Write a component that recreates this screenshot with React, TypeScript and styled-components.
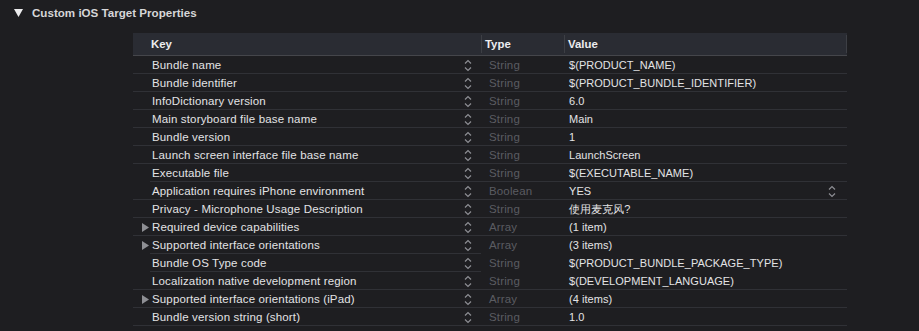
import styled, { createGlobalStyle } from 'styled-components';

const GlobalStyle = createGlobalStyle`
  html, body {
    margin: 0;
    padding: 0;
    background: #1e1e21;
  }
  body {
    font-family: "Liberation Sans", Arial, sans-serif;
    -webkit-font-smoothing: antialiased;
  }
`;

type Row = {
  key: string;
  type: string;
  value: string;
  expandable?: boolean;
  valueStepper?: boolean;
  line?: 'full' | 'inset' | 'key';
};

const rows: Row[] = [
  { key: 'Bundle name', type: 'String', value: '$(PRODUCT_NAME)' },
  { key: 'Bundle identifier', type: 'String', value: '$(PRODUCT_BUNDLE_IDENTIFIER)' },
  { key: 'InfoDictionary version', type: 'String', value: '6.0' },
  { key: 'Main storyboard file base name', type: 'String', value: 'Main' },
  { key: 'Bundle version', type: 'String', value: '1' },
  { key: 'Launch screen interface file base name', type: 'String', value: 'LaunchScreen' },
  { key: 'Executable file', type: 'String', value: '$(EXECUTABLE_NAME)', line: 'inset' },
  { key: 'Application requires iPhone environment', type: 'Boolean', value: 'YES', valueStepper: true },
  { key: 'Privacy - Microphone Usage Description', type: 'String', value: '使用麦克风?' },
  { key: 'Required device capabilities', type: 'Array', value: '(1 item)', expandable: true },
  { key: 'Supported interface orientations', type: 'Array', value: '(3 items)', expandable: true, line: 'key' },
  { key: 'Bundle OS Type code', type: 'String', value: '$(PRODUCT_BUNDLE_PACKAGE_TYPE)', line: 'key' },
  { key: 'Localization native development region', type: 'String', value: '$(DEVELOPMENT_LANGUAGE)' },
  { key: 'Supported interface orientations (iPad)', type: 'Array', value: '(4 items)', expandable: true },
  { key: 'Bundle version string (short)', type: 'String', value: '1.0' },
];

const Page = styled.div`
  width: 919px;
  height: 331px;
  overflow: hidden;
  background: #1e1e21;
  color: #e3e3e5;
`;

const SectionHeader = styled.div`
  display: flex;
  align-items: center;
  height: 25px;
  padding-left: 14px;
  gap: 9px;
  font-size: 11.6px;
  font-weight: 700;
  color: #d6d6d8;
`;

const Table = styled.div`
  margin: 8px 0 0 133px;
  width: 714px;
`;

const HeaderRow = styled.div`
  display: grid;
  grid-template-columns: 349px 83px 282px;
  height: 22px;
  background: #2a2c33;
  border-bottom: 1px solid #45464b;
  font-size: 11.4px;
  font-weight: 700;
  color: #ededef;
`;

const HeaderCell = styled.div<{ $pad: number; $divider?: boolean }>`
  display: flex;
  align-items: center;
  padding-left: ${({ $pad }) => $pad}px;
  border-right: ${({ $divider }) => ($divider ? '1px solid #3d3f45' : 'none')};
  margin: 2px 0;
`;

const BodyRow = styled.div<{ $line: 'full' | 'inset' | 'key' }>`
  position: relative;
  display: grid;
  grid-template-columns: 349px 83px 282px;
  height: 18px;
  font-size: 11.5px;
  letter-spacing: 0.15px;

  &::after {
    content: '';
    position: absolute;
    bottom: 0;
    height: 1px;
    background: #303136;
    left: ${({ $line }) => ($line === 'full' ? '0' : '17px')};
    right: ${({ $line }) => ($line === 'key' ? '366px' : '0')};
  }
`;

const KeyCell = styled.div`
  display: flex;
  align-items: center;
  padding-left: 9px;
  padding-right: 10px;
  color: #e3e3e5;
  white-space: nowrap;
`;

const Disclosure = styled.span`
  width: 10px;
  display: inline-flex;
  align-items: center;
  flex-shrink: 0;
`;

const KeyText = styled.span`
  flex: 1;
`;

const TypeCell = styled.div`
  display: flex;
  align-items: center;
  padding-left: 7px;
  color: #5b5c61;
`;

const ValueCell = styled.div`
  display: flex;
  align-items: center;
  padding-left: 4px;
  padding-right: 11px;
  font-size: 11px;
  letter-spacing: 0.05px;
  color: #e3e3e5;
  white-space: nowrap;
`;

const ValueText = styled.span`
  flex: 1;
`;

const Stepper = () => (
  <svg width="8" height="13" viewBox="0 0 8 13" fill="none">
    <path d="M1 4.5 L4 1.5 L7 4.5" stroke="#8d8e93" strokeWidth="1.2" />
    <path d="M1 8.5 L4 11.5 L7 8.5" stroke="#8d8e93" strokeWidth="1.2" />
  </svg>
);

const RightTriangle = () => (
  <svg width="7" height="9" viewBox="0 0 7 9">
    <path d="M0 0 L7 4.5 L0 9 Z" fill="#8e8f94" />
  </svg>
);

const DownTriangle = () => (
  <svg width="9" height="8" viewBox="0 0 9 8">
    <path d="M0 0 L9 0 L4.5 8 Z" fill="#ececee" />
  </svg>
);

export default function App() {
  return (
    <Page>
      <GlobalStyle />
      <SectionHeader>
        <DownTriangle />
        <span>Custom iOS Target Properties</span>
      </SectionHeader>
      <Table>
        <HeaderRow>
          <HeaderCell $pad={18} $divider>Key</HeaderCell>
          <HeaderCell $pad={3} $divider>Type</HeaderCell>
          <HeaderCell $pad={3} $divider>Value</HeaderCell>
        </HeaderRow>
        {rows.map((r) => (
          <BodyRow key={r.key} $line={r.line ?? 'full'}>
            <KeyCell>
              <Disclosure>{r.expandable && <RightTriangle />}</Disclosure>
              <KeyText>{r.key}</KeyText>
              <Stepper />
            </KeyCell>
            <TypeCell>{r.type}</TypeCell>
            <ValueCell>
              <ValueText>{r.value}</ValueText>
              {r.valueStepper && <Stepper />}
            </ValueCell>
          </BodyRow>
        ))}
      </Table>
    </Page>
  );
}
